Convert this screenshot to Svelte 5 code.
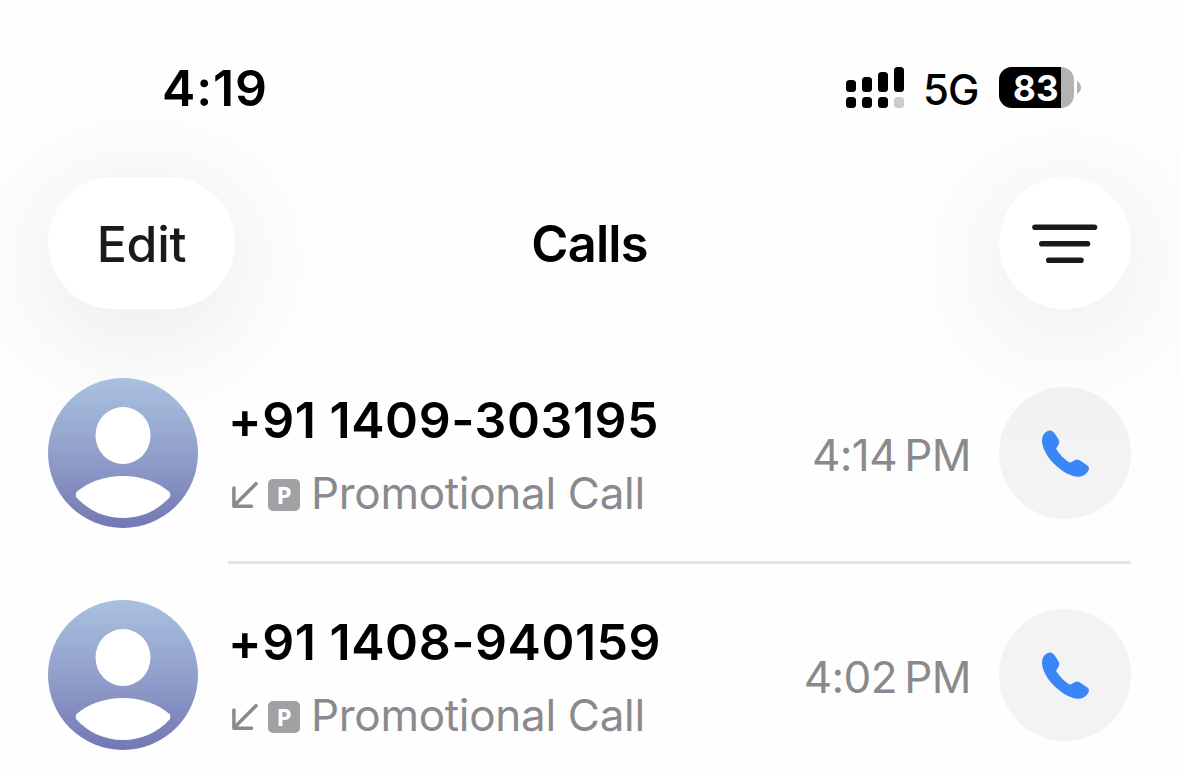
<script>
  const calls = [
    { number: "+91 1409-303195", time: "4:14\u2009PM", label: "Promotional Call", raised: true },
    { number: "+91 1408-940159", time: "4:02\u2009PM", label: "Promotional Call", raised: false },
  ];

  // top and height of each signal bar, left to right
  const bars = [
    { x: 0, y: 13, h: 12 },
    { x: 16, y: 10, h: 15 },
    { x: 32, y: 5, h: 20 },
    { x: 48, y: 0, h: 25 },
  ];

  const battery = 83;
</script>

<div class="screen">
  <header class="status">
    <span class="clock">4:19</span>
    <div class="indicators">
      <svg class="signal" viewBox="0 0 58 41">
        {#each bars as { x, y, h }, i}
          <rect {x} {y} width="10" height={h} rx="3.5" />
          <rect {x} y="30" width="10" height="11" rx="3.5" class:off={i === 3} />
        {/each}
      </svg>
      <span class="network">5G</span>
      <div class="battery">
        <div class="cell">
          <div class="charge" style="width: {battery}%"></div>
          <span class="percent">{battery}</span>
        </div>
        <svg class="tip" viewBox="0 0 4 13"><path d="M0 0C2 1 4 3.500 4 6.500S2 12 0 13z" /></svg>
      </div>
    </div>
  </header>

  <nav class="nav">
    <button class="pill edit">Edit</button>
    <h1>Calls</h1>
    <button class="pill filter" aria-label="Filter">
      <svg viewBox="0 0 66 40">
        <path d="M3 3.200H62.500M9.800 19.800H55.500M16.800 36.200H49" />
      </svg>
    </button>
  </nav>

  <main>
    {#each calls as call}
      <div class="row">
        <svg class="avatar" viewBox="0 0 150 150">
          <defs>
            <linearGradient id="sky" x1="0" y1="0" x2="0" y2="1">
              <stop offset="0" stop-color="#a9c1df" />
              <stop offset="0.5" stop-color="#929fcb" />
              <stop offset="1" stop-color="#7378b3" />
            </linearGradient>
          </defs>
          <circle cx="75" cy="75" r="75" fill="url(#sky)" />
          <ellipse cx="75" cy="57.500" rx="27.500" ry="28.500" />
          <path d="M28.500 114C40 104 57 98 75 98s35 6 46.500 16c1 1.500 1 4 0 5.500C110 132 94 140 75 140s-35-8-46.500-20.500c-1-1.500-1-4 0-5.500z" />
        </svg>
        <div class="body">
          <div class="info">
            <div class="number">{call.number}</div>
            <div class="detail">
              <svg class="incoming" viewBox="0 0 26 26">
                <path d="M24 1.800L2 23.800M1.900 6V24.200H19.500" />
              </svg>
              <span class="tag">P</span>
              <span class="label">{call.label}</span>
            </div>
          </div>
          <span class="time">{call.time}</span>
          <button class="dial" class:raised={call.raised} aria-label="Call">
            <svg viewBox="0 0 141 141">
              <path d="M17 3C23 0 30 1 34 6C40 13 46 22 50 29C53 35 52 40 49 45L44 53C42 56 43 58 45 61C54 75 66 87 80 96C83 98 86 98 89 96L98 91C103 88 108 88 113 91L134 105C140 109 142 114 140 119C135 132 122 140 108 140C85 140 56 122 34 99C12 76 0 50 0 32C0 18 6 8 17 3Z" />
            </svg>
          </button>
        </div>
      </div>
    {/each}
  </main>
</div>

<style>
  :global(body) { background: #fff; }
  .screen {
    width: 1179px;
    height: 774px;
    overflow: hidden;
    background: #fefefe;
    font-family: Inter, "Liberation Sans", sans-serif;
    color: #000;
  }
  button { border: 0; padding: 0; font: inherit; color: inherit; }
  svg { display: block; flex: none; }

  .status {
    display: flex;
    justify-content: space-between;
    align-items: center;
    height: 175px;
    box-sizing: border-box;
    padding: 0 98px 0 162px;
  }
  .clock { font-size: 50px; font-weight: 600; letter-spacing: 0.9px; }
  .indicators { display: flex; align-items: center; }
  .signal { width: 58px; height: 41px; }
  .off { fill: #ccc; }
  .network { width: 56px; margin: 3px 20px 0 19px; font-size: 42px; font-weight: 500; letter-spacing: -1px; white-space: nowrap; }
  .battery { display: flex; align-items: center; gap: 3px; }
  .cell {
    display: grid;
    width: 75px;
    height: 41px;
    border-radius: 13px;
    overflow: hidden;
    background: #b3b3b3;
  }
  .charge, .percent { grid-area: 1 / 1; }
  .charge { background: #000; }
  .percent { padding-left: 14px; font-size: 35px; line-height: 42px; font-weight: 700; letter-spacing: 0.3px; color: #fff; }
  .tip { width: 4px; height: 13px; fill: #b3b3b3; }

  .nav {
    display: grid;
    grid-template-columns: 1fr auto 1fr;
    align-items: center;
    height: 167px;
    box-sizing: border-box;
    padding: 2px 48px 33px;
  }
  .pill {
    height: 132px;
    border-radius: 66px;
    background: #fff;
    box-shadow: 0 20px 125px rgba(0, 0, 0, 0.1);
  }
  .edit { width: 187px; padding-top: 2px; font-size: 50px; font-weight: 500; letter-spacing: -0.3px; color: #1a1a1a; }
  .filter { display: grid; place-items: center; justify-self: end; width: 132px; padding-top: 2px; }
  .filter svg { width: 66px; height: 40px; fill: none; stroke: #1a1a1a; stroke-width: 5.600; stroke-linecap: round; }
  h1 { margin: 1px 0 0; font-size: 50.500px; line-height: 60px; font-weight: 600; letter-spacing: -0.8px; }

  .row { display: flex; align-items: center; gap: 30px; height: 222px; padding: 0 48px; }
  .avatar { width: 150px; height: 150px; fill: #fff; }
  .body {
    display: flex;
    align-items: center;
    flex: 1;
    height: 222px;
    box-shadow: inset 0 -3px #e5e5e5;
  }
  .info { flex: 1; padding-top: 8px; }
  .number { font-size: 50px; line-height: 73px; font-weight: 600; letter-spacing: 0.550px; white-space: nowrap; }
  .detail { display: flex; align-items: center; height: 73px; padding-left: 4px; color: #8a8a8e; }
  .incoming { width: 26px; height: 26px; margin-top: 2px; fill: none; stroke: #8a8a8e; stroke-width: 3.500; stroke-linecap: round; stroke-linejoin: round; }
  .tag {
    width: 32px;
    margin: 3px 11px 0 10px;
    border-radius: 5px;
    background: #a1a1a3;
    color: #fff;
    font-family: "Open Sans", sans-serif;
    font-size: 24px;
    line-height: 32px;
    font-weight: 700;
    text-align: center;
  }
  .label { margin-top: -2px; font-size: 44px; letter-spacing: -0.3px; white-space: nowrap; }
  .time { margin: 3px 28px 0 0; font-size: 44px; letter-spacing: -0.6px; color: #8a8a8e; white-space: nowrap; }
  .dial { display: grid; place-items: center; width: 132px; height: 132px; border-radius: 50%; background: #f3f3f3; }
  .raised { background: linear-gradient(#f1f1f4, #f3f3f3 40%); }
  .dial svg { width: 47px; height: 47px; fill: #3a86f7; }
</style>
